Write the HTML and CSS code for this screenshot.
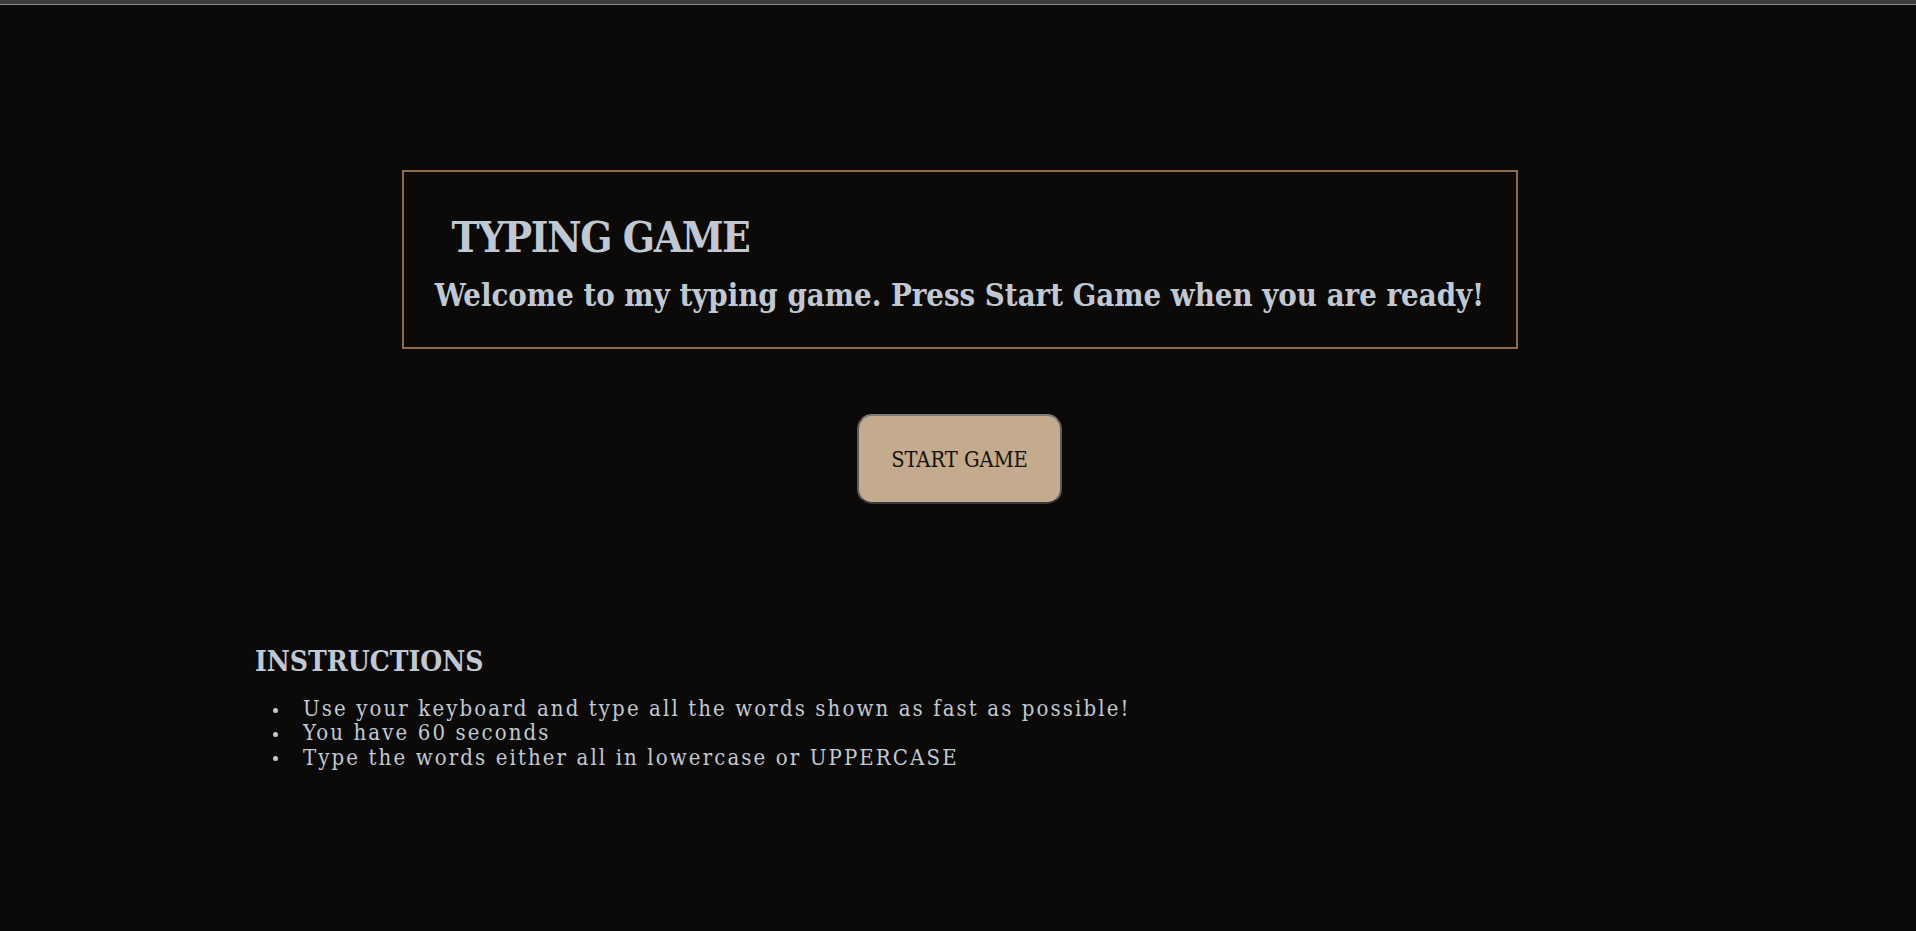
FILE: index.html
```html
<!DOCTYPE html>
<html lang="en">
<head>
<meta charset="utf-8">
<title>Typing Game</title>
<link rel="stylesheet" href="styles.css">
</head>
<body>
<div class="topbar"></div>
<main class="page">
  <section class="card">
    <h1 class="title">TYPING GAME</h1>
    <p class="welcome">Welcome to my typing game. Press Start Game when you are ready!</p>
  </section>
  <div class="actions">
    <button class="start-btn" type="button">START GAME</button>
  </div>
  <section class="instructions">
    <h2 class="instructions-title">INSTRUCTIONS</h2>
    <ul class="instructions-list">
      <li>Use your keyboard and type all the words shown as fast as possible!</li>
      <li>You have 60 seconds</li>
      <li>Type the words either all in lowercase or UPPERCASE</li>
    </ul>
  </section>
</main>
</body>
</html>
```
FILE: styles.css
```css
html, body {
  margin: 0;
  padding: 0;
}

body {
  background: #0b0a08;
  color: #c0c9d3;
  font-family: "DejaVu Serif Condensed", "DejaVu Serif", serif;
  min-height: 931px;
}

.topbar {
  height: 4px;
  background: #3b3b3b;
  border-bottom: 1px solid #8a8a8a;
}

.page {
  display: flex;
  flex-direction: column;
  padding-left: 3px;
}

.card {
  box-sizing: border-box;
  width: 1116px;
  margin: 165px auto 0;
  border: 2px solid #8e6c47;
  padding: 45px 20px 37px;
}

.title {
  margin: 0;
  padding-left: 28px;
  font-size: 42px;
  line-height: 42px;
  font-weight: bold;
  letter-spacing: -1.4px;
}

.welcome {
  margin: 21px 0 0;
  text-align: center;
  font-size: 30.8px;
  line-height: 30px;
  font-weight: bold;
}

.actions {
  display: flex;
  justify-content: center;
  margin-top: 65px;
}

.start-btn {
  box-sizing: border-box;
  width: 205px;
  height: 90px;
  background: #c4ab8e;
  color: #141210;
  border: 2px solid #5c5c5c;
  border-top-color: #7a7a7a;
  border-bottom-color: #3a3a3a;
  border-radius: 15px;
  font-family: "DejaVu Serif Condensed", "DejaVu Serif", serif;
  font-size: 21.7px;
  padding: 0;
  cursor: pointer;
}

.instructions {
  margin-top: 144px;
  padding-left: 252px;
}

.instructions-title {
  margin: 0;
  font-size: 28px;
  line-height: 28px;
  font-weight: bold;
}

.instructions-list {
  list-style: none;
  margin: 21px 0 0;
  padding-left: 48px;
  font-size: 22px;
  line-height: 24.4px;
  letter-spacing: 2.1px;
}

.instructions-list li::before {
  content: "";
  display: inline-block;
  width: 5px;
  height: 5px;
  border-radius: 50%;
  background: #c0c9d3;
  vertical-align: middle;
  margin-left: -30px;
  margin-right: 25px;
}
```
